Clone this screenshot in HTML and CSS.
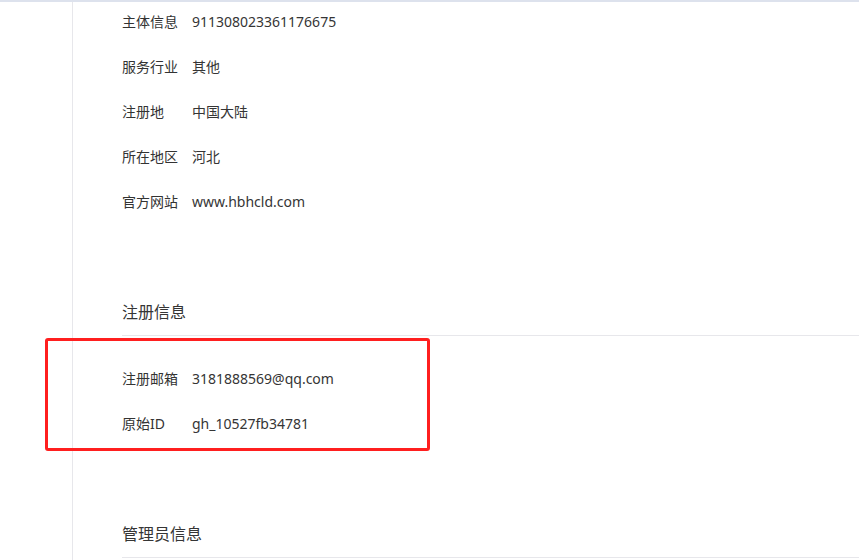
FILE: index.html
```html
<!DOCTYPE html>
<html lang="zh-CN">
<head>
<meta charset="utf-8">
<title>账号详情</title>
<link rel="stylesheet" href="styles.css">
</head>
<body>
<div class="page">
  <aside class="sidebar"></aside>
  <main class="content">
    <section class="info-list">
      <div class="row"><span class="label">主体信息</span><span class="value">911308023361176675</span></div>
      <div class="row"><span class="label">服务行业</span><span class="value">其他</span></div>
      <div class="row"><span class="label">注册地</span><span class="value">中国大陆</span></div>
      <div class="row"><span class="label">所在地区</span><span class="value">河北</span></div>
      <div class="row"><span class="label">官方网站</span><span class="value">www.hbhcld.com</span></div>
    </section>
    <section class="group">
      <h2 class="group-title">注册信息</h2>
      <div class="info-list">
        <div class="row"><span class="label">注册邮箱</span><span class="value">3181888569@qq.com</span></div>
        <div class="row"><span class="label">原始ID</span><span class="value">gh_10527fb34781</span></div>
      </div>
    </section>
    <section class="group">
      <h2 class="group-title">管理员信息</h2>
    </section>
  </main>
  <div class="highlight"></div>
</div>
</body>
</html>
```

FILE: styles.css
```css
html, body {
  margin: 0;
  padding: 0;
  background: #ffffff;
}

body {
  font-family: "Noto Sans", "Noto Sans CJK SC", sans-serif;
  color: #333333;
  font-size: 14px;
  overflow: hidden;
  height: 560px;
}

.page {
  position: relative;
  display: flex;
  border-top: 2px solid #dde2ed;
  min-height: 558px;
}

.sidebar {
  width: 72px;
  flex: none;
  border-right: 1px solid #e7e7eb;
}

.content {
  flex: 1;
  padding: 10px 0 0 49px;
}

.info-list {
  display: flex;
  flex-direction: column;
  gap: 25px;
}

.row {
  display: flex;
  line-height: 20px;
  height: 20px;
}

.label {
  width: 70px;
  flex: none;
  color: #333333;
}

.value {
  color: #353535;
}

.group {
  margin-top: 89px;
}

.group-title {
  margin: 0;
  font-size: 16px;
  font-weight: normal;
  line-height: 22px;
  color: #353535;
  padding-bottom: 12px;
  border-bottom: 1px solid #e7e7eb;
}

.group .info-list {
  margin-top: 33px;
}

.highlight {
  position: absolute;
  left: 45px;
  top: 336px;
  width: 379px;
  height: 107px;
  border: 3px solid #ff1f1f;
  border-radius: 3px;
}
```
